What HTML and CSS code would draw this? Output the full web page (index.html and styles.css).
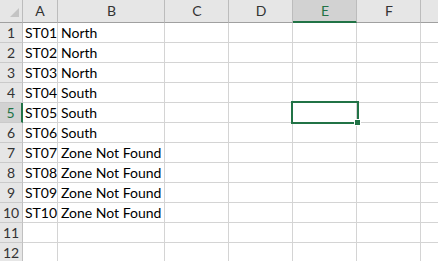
FILE: index.html
```html
<!DOCTYPE html>
<html lang="en">
<head>
    <meta charset="UTF-8">
    <title>Sheet1</title>
    <link rel="stylesheet" href="styles.css">
</head>
<body>
    <div class="sheet">
        <div class="row head">
            <div class="cell corner">
                <svg width="22" height="22" viewBox="0 0 22 22"><polygon points="10,17 19,17 19,8" fill="#c4c4c4"/></svg>
            </div>
            <div class="cell col">A</div>
            <div class="cell col">B</div>
            <div class="cell col">C</div>
            <div class="cell col">D</div>
            <div class="cell col active">E</div>
            <div class="cell col">F</div>
            <div class="cell col"></div>
        </div>
        <div class="row"><div class="cell num">1</div><div class="cell">ST01</div><div class="cell">North</div><div class="cell"></div><div class="cell"></div><div class="cell"></div><div class="cell"></div><div class="cell"></div></div>
        <div class="row"><div class="cell num">2</div><div class="cell">ST02</div><div class="cell">North</div><div class="cell"></div><div class="cell"></div><div class="cell"></div><div class="cell"></div><div class="cell"></div></div>
        <div class="row"><div class="cell num">3</div><div class="cell">ST03</div><div class="cell">North</div><div class="cell"></div><div class="cell"></div><div class="cell"></div><div class="cell"></div><div class="cell"></div></div>
        <div class="row"><div class="cell num">4</div><div class="cell">ST04</div><div class="cell">South</div><div class="cell"></div><div class="cell"></div><div class="cell"></div><div class="cell"></div><div class="cell"></div></div>
        <div class="row"><div class="cell num active">5</div><div class="cell">ST05</div><div class="cell">South</div><div class="cell"></div><div class="cell"></div><div class="cell selected"><div class="cursor"><span class="handle"></span></div></div><div class="cell"></div><div class="cell"></div></div>
        <div class="row"><div class="cell num">6</div><div class="cell">ST06</div><div class="cell">South</div><div class="cell"></div><div class="cell"></div><div class="cell"></div><div class="cell"></div><div class="cell"></div></div>
        <div class="row"><div class="cell num">7</div><div class="cell">ST07</div><div class="cell">Zone Not Found</div><div class="cell"></div><div class="cell"></div><div class="cell"></div><div class="cell"></div><div class="cell"></div></div>
        <div class="row"><div class="cell num">8</div><div class="cell">ST08</div><div class="cell">Zone Not Found</div><div class="cell"></div><div class="cell"></div><div class="cell"></div><div class="cell"></div><div class="cell"></div></div>
        <div class="row"><div class="cell num">9</div><div class="cell">ST09</div><div class="cell">Zone Not Found</div><div class="cell"></div><div class="cell"></div><div class="cell"></div><div class="cell"></div><div class="cell"></div></div>
        <div class="row"><div class="cell num">10</div><div class="cell">ST10</div><div class="cell">Zone Not Found</div><div class="cell"></div><div class="cell"></div><div class="cell"></div><div class="cell"></div><div class="cell"></div></div>
        <div class="row"><div class="cell num">11</div><div class="cell"></div><div class="cell"></div><div class="cell"></div><div class="cell"></div><div class="cell"></div><div class="cell"></div><div class="cell"></div></div>
        <div class="row"><div class="cell num">12</div><div class="cell"></div><div class="cell"></div><div class="cell"></div><div class="cell"></div><div class="cell"></div><div class="cell"></div><div class="cell"></div></div>
    </div>
</body>
</html>
```

FILE: styles.css
```css
body {
    margin: 0;
    background: #ffffff;
    overflow: hidden;
    font-family: Lato, "Liberation Sans", sans-serif;
    font-size: 14px;
    color: #000000;
}
.sheet {
    width: 100%;
}
.row {
    display: grid;
    grid-template-columns: 23px 35px 107px 64px 64px 64px 64px 1fr;
    height: 20px;
}
.cell {
    box-sizing: border-box;
    border-right: 1px solid #d4d4d4;
    border-bottom: 1px solid #d4d4d4;
    padding: 0 2px 0 3px;
    line-height: 19px;
    white-space: nowrap;
}
.row .cell:nth-child(2) {
    padding-left: 2px;
}
.row .cell:last-child {
    border-right: none;
}
.head {
    height: 23px;
}
.head .cell {
    background: #e6e6e6;
    border-right-color: #bcbcbc;
    border-bottom-color: #a0a0a0;
    line-height: 22px;
    text-align: center;
    color: #333333;
}
.corner {
    padding: 0;
}
.corner svg {
    display: block;
}
.num {
    background: #e6e6e6;
    border-right-color: #c0c0c0;
    border-bottom-color: #cacaca;
    text-align: center;
    color: #333333;
    padding: 0;
}
.head .active {
    background: #d2d2d2;
    border-bottom: 2px solid #217346;
    line-height: 21px;
    color: #217346;
}
.num.active {
    background: #d2d2d2;
    border-right: 2px solid #217346;
    color: #217346;
}
.selected {
    position: relative;
}
.cursor {
    position: absolute;
    left: -2px;
    top: -2px;
    width: 68px;
    height: 23px;
    box-sizing: border-box;
    border: 2px solid #217346;
}
.handle {
    position: absolute;
    right: -4px;
    bottom: -4px;
    width: 5px;
    height: 5px;
    background: #217346;
    border: 1px solid #ffffff;
}
```
